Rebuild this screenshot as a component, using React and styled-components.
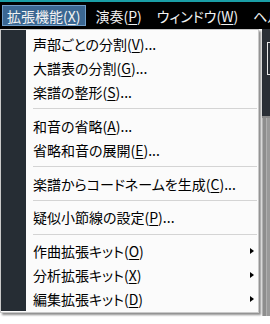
import React from "react";
import styled, { createGlobalStyle } from "styled-components";

const GlobalStyle = createGlobalStyle`
    html, body {
        margin: 0;
        padding: 0;
        background: #ffffff;
    }
    body {
        width: 270px;
        height: 324px;
        overflow: hidden;
        font-family: "Noto Sans CJK JP", "Noto Sans", sans-serif;
    }
`

const menuBar = [
    { label: "拡張機能", key: "X", active: true },
    { label: "演奏", key: "P" },
    { label: "ウィンドウ", key: "W" },
    { label: "ヘルプ", key: "H" },
];

const items = [
    { label: "声部ごとの分割", key: "V", dots: true },
    { label: "大譜表の分割", key: "G", dots: true },
    { label: "楽譜の整形", key: "S", dots: true },
    { sep: true },
    { label: "和音の省略", key: "A", dots: true },
    { label: "省略和音の展開", key: "E", dots: true },
    { sep: true },
    { label: "楽譜からコードネームを生成", key: "C", dots: true },
    { sep: true },
    { label: "疑似小節線の設定", key: "P", dots: true },
    { sep: true },
    { label: "作曲拡張キット", key: "O", sub: true },
    { label: "分析拡張キット", key: "X", sub: true },
    { label: "編集拡張キット", key: "D", sub: true },
];

function Label({ label, hotkey, dots }) {
    return (
        <span>
            {label}(<Key>{hotkey}</Key>){dots ? "..." : ""}
        </span>
    );
}

export default function App() {
    return (
        <>
            <GlobalStyle />
            <Window>
                <TopLine />
                <Bar>
                    {menuBar.map((m) => (
                        <BarItem key={m.label} $active={m.active}>
                            <Label label={m.label} hotkey={m.key} />
                        </BarItem>
                    ))}
                </Bar>
                <Workspace>
                    <Canvas />
                    <Side>
                        <SideTools>
                            <ToolBox />
                        </SideTools>
                        <SideScroll />
                    </Side>
                </Workspace>

                <Menu>
                    <Gutter />
                    <List>
                        {items.map((it, i) =>
                            it.sep ? (
                                <Separator key={i} />
                            ) : (
                                <Item key={i}>
                                    <Label label={it.label} hotkey={it.key} dots={it.dots} />
                                    {it.sub && <Arrow />}
                                </Item>
                            )
                        )}
                    </List>
                </Menu>
            </Window>
        </>
    );
}

const Window = styled.div`
    position: relative;
    width: 270px;
    height: 324px;
    display: flex;
    flex-direction: column;
    background: #ffffff;
`

const TopLine = styled.div`
    height: 2px;
    background: #1a9ea6;
`

const Bar = styled.div`
    height: 27px;
    background: #000000;
    display: flex;
    align-items: center;
    gap: 5px;
    padding-left: 2px;
    white-space: nowrap;
    overflow: hidden;
`

const BarItem = styled.div`
    height: 19px;
    display: flex;
    align-items: center;
    padding: 0 4px;
    border: 1px solid ${(p) => (p.$active ? "#6f9dc8" : "transparent")};
    background: ${(p) => (p.$active ? "#3b6792" : "transparent")};
    color: #f2f2f2;
    font-size: 14px;
    font-feature-settings: "palt";
`

const Key = styled.u`
    text-decoration: underline;
    text-underline-offset: 2px;
    text-decoration-thickness: 1px;
`

const Workspace = styled.div`
    flex: 1;
    display: flex;
`

const Canvas = styled.div`
    flex: 1;
    background: #ffffff;
`

const Side = styled.div`
    width: 8px;
    display: flex;
    flex-direction: column;
    margin-bottom: 8px;
`

const SideTools = styled.div`
    height: 89px;
    background: #2a2f36;
    border-bottom: 2px solid #8a8a8a;
    padding: 13px 0 0 5px;
    box-sizing: border-box;
`

const ToolBox = styled.div`
    height: 31px;
    border: 1px solid #e8e8e8;
    border-right: none;
`

const SideScroll = styled.div`
    flex: 1;
    background: linear-gradient(to right, #b8b8b8 0 1px, #8e8e8e 1px 4px, #b0b0b0 4px 5px, #9a9a9a 5px);
`

const Menu = styled.div`
    position: absolute;
    top: 29px;
    left: 0;
    width: 259px;
    height: 284px;
    box-sizing: border-box;
    border: 1px solid #c9c9c9;
    background: #fbfbfb;
    padding: 0 1px 1px 0;
    display: flex;
    box-shadow: 2px 2px 2px rgba(0, 0, 0, 0.45);
`

const Gutter = styled.div`
    width: 25px;
    background: #262d34;
`

const List = styled.div`
    flex: 1;
    display: flex;
    flex-direction: column;
    padding-top: 2px;
`

const Item = styled.div`
    height: 24px;
    display: flex;
    align-items: center;
    justify-content: space-between;
    padding: 0 3px 0 7px;
    font-size: 14px;
    color: #000000;
    white-space: nowrap;
    font-feature-settings: "palt";
`

const Separator = styled.div`
    height: 10px;
    margin-left: 7px;
    display: flex;
    align-items: center;

    &::after {
        content: "";
        flex: 1;
        height: 1px;
        background: #d4d4d4;
    }
`

const Arrow = styled.span`
    width: 0;
    height: 0;
    border-top: 3.5px solid transparent;
    border-bottom: 3.5px solid transparent;
    border-left: 4px solid #000000;
`
